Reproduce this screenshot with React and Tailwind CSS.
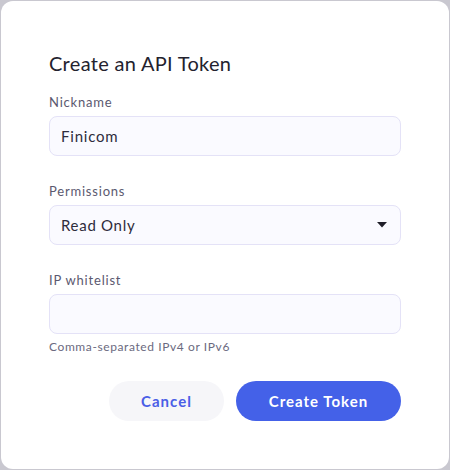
import React from 'react';

const font = { fontFamily: 'Lato, "Noto Sans", sans-serif' };

function Field({ label, children, hint }) {
  return (
    <div className="flex flex-col">
      <label className="text-[13px] leading-[18px] text-[#5b596f] tracking-[0.8px] mb-[5px]">{label}</label>
      {children}
      {hint && <p className="mt-[5px] text-[12px] leading-[16px] text-[#6b6a80] tracking-[0.6px]">{hint}</p>}
    </div>
  );
}

export default function App() {
  return (
    <div className="w-[450px] h-[470px] bg-[#c9c8d0] p-px" style={font}>
      <div className="h-full bg-white rounded-[12px] px-12 pt-12">
        <h1 className="text-[20px] leading-[28px] text-[#23222e] tracking-[0.3px] mb-[16px]">Create an API Token</h1>

        <div className="flex flex-col gap-[26px]">
          <Field label="Nickname">
            <div className="h-[40px] rounded-[8px] border border-[#e4e2f7] bg-[#fafaff] flex items-center px-[11px] text-[15px] text-[#2e2c3c] tracking-[0.8px]">
              Finicom
            </div>
          </Field>

          <Field label="Permissions">
            <div className="h-[40px] rounded-[8px] border border-[#e4e2f7] bg-[#fafaff] flex items-center justify-between pl-[11px] pr-[13px] text-[15px] text-[#2e2c3c] tracking-[0.7px]">
              <span>Read Only</span>
              <svg width="10" height="6" viewBox="0 0 10 6">
                <path d="M0 0h10L5 5.5z" fill="#1f1e29" />
              </svg>
            </div>
          </Field>

          <Field label="IP whitelist" hint="Comma-separated IPv4 or IPv6">
            <div className="h-[40px] rounded-[8px] border border-[#e4e2f7] bg-[#fafaff]" />
          </Field>
        </div>

        <div className="flex justify-end gap-3 mt-[26px]">
          <button className="w-[115px] h-[40px] rounded-full bg-[#f6f6f9] text-[#4a5ee6] text-[15px] font-bold tracking-[1px]">
            Cancel
          </button>
          <button className="w-[165px] h-[40px] rounded-full bg-[#4461e8] text-white text-[15px] font-bold tracking-[1px]">
            Create Token
          </button>
        </div>
      </div>
    </div>
  );
}
